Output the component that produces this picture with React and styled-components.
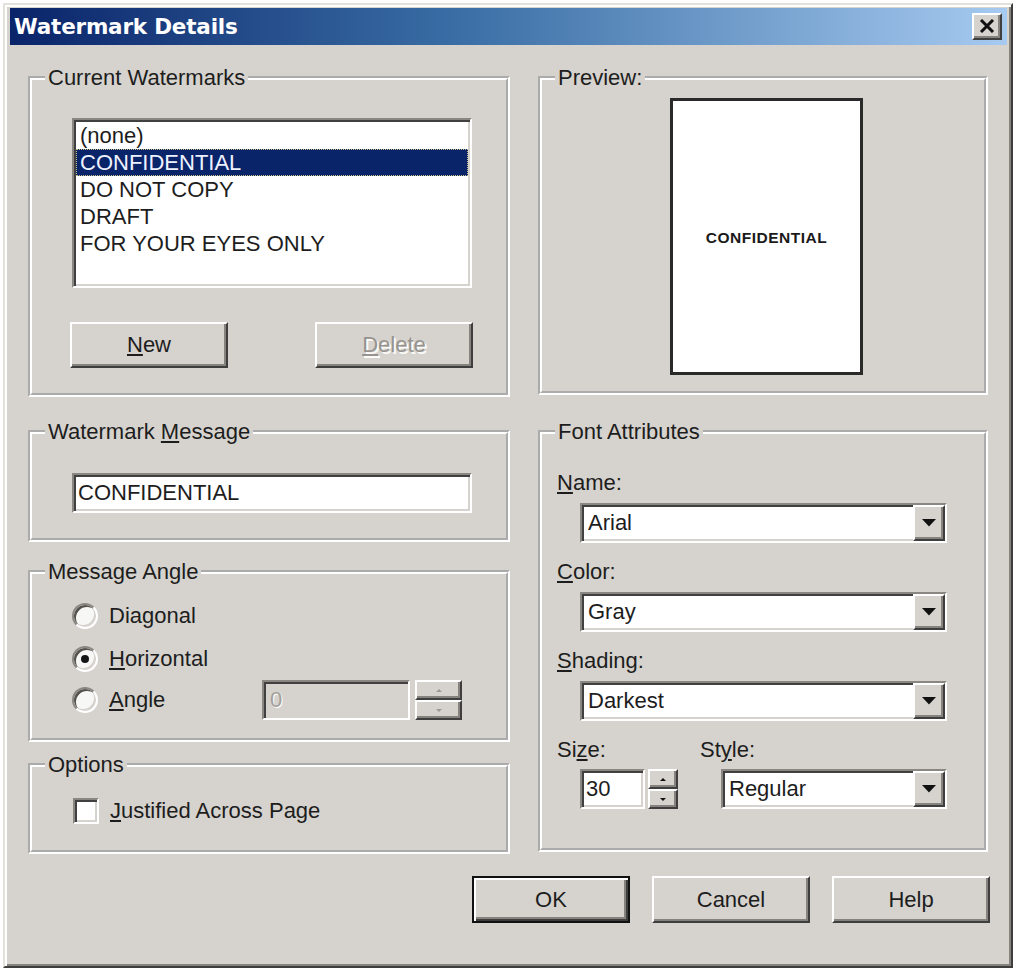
import React from 'react';
import styled, { createGlobalStyle } from 'styled-components';

const FACE = '#d6d3ce';
const TEXT = '#1d1d1d';
const SHADOW = '#86837e';
const DARK = '#3e3e3e';
const SANS = `"Liberation Sans", Arial, sans-serif`;

const Global = createGlobalStyle`
  html, body { margin: 0; padding: 0; background: #fff; }
  body { font-family: ${SANS}; color: ${TEXT}; }
  *, *::before, *::after { box-sizing: border-box; }
`;

/* ---------- window frame ---------- */

const Window = styled.div`
  margin: 3px 0 0 3px;
  width: 1010px;
  height: 965px;
  background: ${FACE};
  border: 2px solid;
  border-color: #e4e1dc ${DARK} ${DARK} #e4e1dc;
  box-shadow: inset 2px 2px 0 #fff, inset -2px -2px 0 ${SHADOW};
  padding: 3px 4px 0 5px;
  display: flex;
  flex-direction: column;
`;

const TitleBar = styled.div`
  height: 37px;
  flex: none;
  display: flex;
  align-items: center;
  justify-content: space-between;
  padding: 0 5px 0 4px;
  background: linear-gradient(90deg, #0a246a 0%, #3a6ea5 45%, #a6caf0 100%);
`;

const TitleText = styled.span`
  font-family: "DejaVu Sans", Verdana, sans-serif;
  font-weight: bold;
  font-size: 21.5px;
  color: #fff;
  letter-spacing: -0.2px;
`;

const CloseButton = styled.div`
  width: 30px;
  height: 27px;
  background: ${FACE};
  border: 2px solid;
  border-color: #fff ${DARK} ${DARK} #fff;
  box-shadow: inset -2px -2px 0 ${SHADOW};
  display: flex;
  align-items: center;
  justify-content: center;
  padding-bottom: 1px;
`;

/* ---------- layout ---------- */

const Content = styled.div`
  padding: 20px 19px 0 18px;
  display: flex;
  flex-direction: column;
`;

const Columns = styled.div`
  display: flex;
  gap: 28px;
  align-items: flex-start;
`;

const Column = styled.div`
  width: ${p => p.$w}px;
  display: flex;
  flex-direction: column;
`;

const Group = styled.fieldset`
  margin: ${p => p.$mt || 0}px 0 0;
  padding: 0;
  min-width: 0;
  height: ${p => p.$h}px;
  border: 4px groove #ffffff;
`;

const Legend = styled.legend`
  margin-left: 13px;
  padding: 0 3px;
  font-size: 22px;
  line-height: 26px;
  color: ${TEXT};
`;

const GroupBody = styled.div`
  padding: ${p => p.$pad};
  display: flex;
  flex-direction: column;
  align-items: flex-start;
`;

/* ---------- controls ---------- */

const sunken = `
  border: 2px solid;
  border-color: #8a8782 #fff #fff #8a8782;
  box-shadow: inset 2px 2px 0 #404040, inset -2px -2px 0 ${FACE};
`;

const raised = `
  border: 2px solid;
  border-color: #fff ${DARK} ${DARK} #fff;
  box-shadow: inset -2px -2px 0 ${SHADOW};
`;

const ListBox = styled.div`
  ${sunken}
  margin-left: 2px;
  width: 400px;
  height: 170px;
  background: #fff;
  padding: 2px 2px 0;
`;

const ListItem = styled.div`
  height: 27px;
  line-height: 27px;
  font-size: 22px;
  padding-left: 4px;
  white-space: nowrap;
  color: ${p => (p.$selected ? '#eef2ff' : TEXT)};
  background: ${p => (p.$selected ? '#0a246a' : 'transparent')};
  outline: ${p => (p.$selected ? '1px dotted #c9c08a' : 'none')};
  outline-offset: -1px;
`;

const PairRow = styled.div`
  margin-top: 34px;
  width: 403px;
  display: flex;
  justify-content: space-between;
`;

const PushButton = styled.div`
  ${raised}
  width: ${p => p.$w || 158}px;
  height: ${p => p.$h || 46}px;
  background: ${FACE};
  display: flex;
  align-items: center;
  justify-content: center;
  font-size: 22px;
  color: ${p => (p.$disabled ? '#97948f' : TEXT)};
  text-shadow: ${p => (p.$disabled ? '2px 2px 0 #fbfbfa' : 'none')};
  ${p =>
    p.$default &&
    `
    border: 2px solid #111;
    box-shadow: inset 2px 2px 0 #fff, inset -2px -2px 0 ${DARK}, inset -4px -4px 0 ${SHADOW};
  `}
`;

const EditBox = styled.div`
  ${sunken}
  width: ${p => p.$w}px;
  height: ${p => p.$h || 40}px;
  margin-left: ${p => p.$ml || 0}px;
  background: ${p => (p.$disabled ? FACE : '#fff')};
  display: flex;
  align-items: center;
  padding-left: ${p => p.$pl || 4}px;
  font-size: 22px;
  color: ${p => (p.$disabled ? '#a3a09b' : TEXT)};
  text-shadow: ${p => (p.$disabled ? '1px 1px 0 #fff' : 'none')};
`;

const OptionGrid = styled.div`
  display: grid;
  grid-template-rows: 43px 43px 40px;
`;

const OptionRow = styled.div`
  display: flex;
  align-items: center;
`;

const OptionLabel = styled.label`
  display: flex;
  align-items: center;
  width: ${p => (p.$w ? `${p.$w}px` : 'auto')};
  font-size: 22px;
`;

const Radio = styled.span`
  flex: none;
  width: 26px;
  height: 26px;
  border-radius: 50%;
  background: #f7f7f6;
  border: 2px solid;
  border-color: #8a8782 #fff #fff #8a8782;
  box-shadow: inset 2px 2px 0 #55524e, inset -2px -2px 0 ${FACE};
  display: flex;
  align-items: center;
  justify-content: center;
  margin-right: 11px;
  &::after {
    content: '';
    width: 8px;
    height: 8px;
    border-radius: 50%;
    background: ${p => (p.$checked ? '#151515' : 'transparent')};
  }
`;

const CheckBox = styled.span`
  ${sunken}
  flex: none;
  width: 26px;
  height: 26px;
  background: #fff;
  margin-right: 11px;
`;

const Spinner = styled.div`
  width: ${p => p.$w}px;
  height: 40px;
  margin-left: ${p => p.$ml}px;
  display: flex;
  flex-direction: column;
`;

const SpinHalf = styled.div`
  ${raised}
  flex: 1;
  background: ${FACE};
  display: flex;
  align-items: center;
  justify-content: center;
`;

const Arrow = styled.span`
  width: 0;
  height: 0;
  border-left: 3px solid transparent;
  border-right: 3px solid transparent;
  ${p => (p.$down ? 'border-top' : 'border-bottom')}: 3px solid ${p => (p.$disabled ? '#9c9994' : '#111')};
`;

const Page = styled.div`
  width: 193px;
  height: 277px;
  background: #fff;
  border: 3px solid #2a2a2a;
  display: flex;
  align-items: center;
  justify-content: center;
  padding-top: 2px;
`;

const PageText = styled.span`
  font-weight: bold;
  font-size: 15.5px;
  letter-spacing: 0.5px;
  color: #1a1a1a;
`;

const FieldLabel = styled.div`
  font-size: 22px;
  line-height: 26px;
  margin-top: ${p => p.$mt || 0}px;
`;

const Combo = styled.div`
  ${sunken}
  width: ${p => p.$w}px;
  height: 40px;
  margin: ${p => p.$mt || 0}px 0 0 ${p => p.$ml || 0}px;
  background: #fff;
  display: flex;
  align-items: stretch;
  justify-content: space-between;
`;

const ComboText = styled.span`
  align-self: center;
  padding-left: 6px;
  font-size: 22px;
`;

const DropButton = styled.span`
  ${raised}
  width: 32px;
  background: ${FACE};
  display: flex;
  align-items: center;
  justify-content: center;
`;

const SizeRow = styled.div`
  display: flex;
  margin-top: 16px;
`;

const SizeCol = styled.div`
  width: ${p => p.$w}px;
  display: flex;
  flex-direction: column;
`;

const InlineControls = styled.div`
  display: flex;
  margin: 6px 0 0 ${p => p.$ml}px;
`;

const DialogButtons = styled.div`
  margin: 22px -2px 0 0;
  display: flex;
  justify-content: flex-end;
  gap: 22px;
`;

/* ---------- small drawings ---------- */

const CloseGlyph = () => (
  <svg width="16" height="14" viewBox="0 0 16 14">
    <path d="M2 1 L14 13 M14 1 L2 13" stroke="#111" strokeWidth="3" fill="none" />
  </svg>
);

const DropGlyph = () => (
  <svg width="14" height="8" viewBox="0 0 14 8">
    <path d="M0 0 H14 L7 7.5 Z" fill="#111" />
  </svg>
);

const Dropdown = ({ w, value, mt, ml }) => (
  <Combo $w={w} $mt={mt} $ml={ml}>
    <ComboText>{value}</ComboText>
    <DropButton>
      <DropGlyph />
    </DropButton>
  </Combo>
);

const Spin = ({ w, ml, disabled }) => (
  <Spinner $w={w} $ml={ml}>
    <SpinHalf>
      <Arrow $disabled={disabled} />
    </SpinHalf>
    <SpinHalf>
      <Arrow $down $disabled={disabled} />
    </SpinHalf>
  </Spinner>
);

const watermarks = ['(none)', 'CONFIDENTIAL', 'DO NOT COPY', 'DRAFT', 'FOR YOUR EYES ONLY'];

export default function App() {
  return (
    <>
      <Global />
      <Window>
        <TitleBar>
          <TitleText>Watermark Details</TitleText>
          <CloseButton>
            <CloseGlyph />
          </CloseButton>
        </TitleBar>

        <Content>
          <Columns>
            <Column $w={482}>
              <Group $h={332}>
                <Legend>Current Watermarks</Legend>
                <GroupBody $pad="27px 0 0 38px">
                  <ListBox>
                    {watermarks.map(w => (
                      <ListItem key={w} $selected={w === 'CONFIDENTIAL'}>
                        {w}
                      </ListItem>
                    ))}
                  </ListBox>
                  <PairRow>
                    <PushButton>
                      <span>
                        <u>N</u>ew
                      </span>
                    </PushButton>
                    <PushButton $disabled>
                      <span>
                        <u>D</u>elete
                      </span>
                    </PushButton>
                  </PairRow>
                </GroupBody>
              </Group>

              <Group $h={123} $mt={22}>
                <Legend>
                  Watermark <u>M</u>essage
                </Legend>
                <GroupBody $pad="28px 0 0 40px">
                  <EditBox $w={400}>CONFIDENTIAL</EditBox>
                </GroupBody>
              </Group>

              <Group $h={183} $mt={17}>
                <Legend>Message Angle</Legend>
                <GroupBody $pad="9px 0 0 40px">
                  <OptionGrid>
                    <OptionRow>
                      <OptionLabel>
                        <Radio />
                        <span>
                          Dia<u>g</u>onal
                        </span>
                      </OptionLabel>
                    </OptionRow>
                    <OptionRow>
                      <OptionLabel>
                        <Radio $checked />
                        <span>
                          <u>H</u>orizontal
                        </span>
                      </OptionLabel>
                    </OptionRow>
                    <OptionRow>
                      <OptionLabel $w={190}>
                        <Radio />
                        <span>
                          <u>A</u>ngle
                        </span>
                      </OptionLabel>
                      <EditBox $w={148} $disabled $pl={6}>
                        0
                      </EditBox>
                      <Spin w={47} ml={5} disabled />
                    </OptionRow>
                  </OptionGrid>
                </GroupBody>
              </Group>

              <Group $h={102} $mt={10}>
                <Legend>Options</Legend>
                <GroupBody $pad="20px 0 0 41px">
                  <OptionLabel>
                    <CheckBox />
                    <span>
                      <u>J</u>ustified Across Page
                    </span>
                  </OptionLabel>
                </GroupBody>
              </Group>
            </Column>

            <Column $w={450}>
              <Group $h={330}>
                <Legend>Preview:</Legend>
                <GroupBody $pad="7px 0 0 128px">
                  <Page>
                    <PageText>CONFIDENTIAL</PageText>
                  </Page>
                </GroupBody>
              </Group>

              <Group $h={433} $mt={24}>
                <Legend>Font Attributes</Legend>
                <GroupBody $pad="25px 0 0 15px">
                  <FieldLabel>
                    <u>N</u>ame:
                  </FieldLabel>
                  <Dropdown w={367} value="Arial" mt={7} ml={23} />
                  <FieldLabel $mt={16}>
                    <u>C</u>olor:
                  </FieldLabel>
                  <Dropdown w={367} value="Gray" mt={7} ml={23} />
                  <FieldLabel $mt={16}>
                    <u>S</u>hading:
                  </FieldLabel>
                  <Dropdown w={367} value="Darkest" mt={7} ml={23} />
                  <SizeRow>
                    <SizeCol $w={143}>
                      <FieldLabel>
                        Si<u>z</u>e:
                      </FieldLabel>
                      <InlineControls $ml={23}>
                        <EditBox $w={65}>30</EditBox>
                        <Spin w={30} ml={3} />
                      </InlineControls>
                    </SizeCol>
                    <SizeCol $w={250}>
                      <FieldLabel>
                        St<u>y</u>le:
                      </FieldLabel>
                      <Dropdown w={226} value="Regular" mt={6} ml={21} />
                    </SizeCol>
                  </SizeRow>
                </GroupBody>
              </Group>
            </Column>
          </Columns>

          <DialogButtons>
            <PushButton $default $h={47}>OK</PushButton>
            <PushButton $h={47}>Cancel</PushButton>
            <PushButton $h={47}>Help</PushButton>
          </DialogButtons>
        </Content>
      </Window>
    </>
  );
}
